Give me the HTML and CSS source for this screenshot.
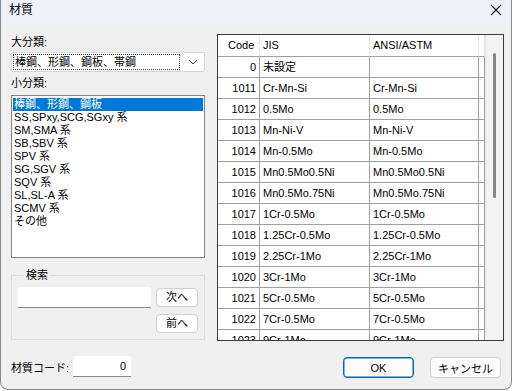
FILE: index.html
```html
<!DOCTYPE html>
<html lang="ja">
<head>
    <meta charset="UTF-8">
    <title>材質</title>
    <link rel="stylesheet" href="styles.css">
</head>
<body>
    <div class="window">
        <div class="titlebar">
            <span class="title">材質</span>
            <svg class="close" width="12" height="12" viewBox="0 0 12 12">
                <path d="M1 1L11 11M11 1L1 11" stroke="#1a1a1a" stroke-width="1.1" fill="none"/>
            </svg>
        </div>

        <div class="content">
            <div class="left">
                <div class="caption">大分類:</div>
                <div class="combo">
                    <div class="combo-text">棒鋼、形鋼、鋼板、帯鋼</div>
                    <svg class="chevron" width="10" height="6" viewBox="0 0 10 6">
                        <path d="M1 1L5 5L9 1" stroke="#444" stroke-width="1" fill="none"/>
                    </svg>
                </div>

                <div class="caption caption-second">小分類:</div>
                <ul class="listbox">
                    <li class="selected">棒鋼、形鋼、鋼板</li>
                    <li>SS,SPxy,SCG,SGxy 系</li>
                    <li>SM,SMA 系</li>
                    <li>SB,SBV 系</li>
                    <li>SPV 系</li>
                    <li>SG,SGV 系</li>
                    <li>SQV 系</li>
                    <li>SL,SL-A 系</li>
                    <li>SCMV 系</li>
                    <li>その他</li>
                </ul>

                <fieldset class="search">
                    <legend>検索</legend>
                    <div class="search-row">
                        <input type="text" class="search-input">
                        <div class="search-buttons">
                            <button class="btn btn-small">次へ</button>
                            <button class="btn btn-small">前へ</button>
                        </div>
                    </div>
                </fieldset>

                <div class="code-row">
                    <span class="code-label">材質コード:</span>
                    <div class="code-input">0</div>
                </div>
            </div>

            <div class="right">
                <div class="grid">
                    <div class="grid-view">
                        <table>
                            <colgroup>
                                <col class="col-code">
                                <col class="col-jis">
                                <col class="col-ansi">
                                <col class="col-extra">
                            </colgroup>
                            <thead>
                                <tr><th class="num">Code</th><th>JIS</th><th>ANSI/ASTM</th><th></th></tr>
                            </thead>
                            <tbody>
                                <tr><td class="num">0</td><td>未設定</td><td></td><td></td></tr>
                                <tr><td class="num">1011</td><td>Cr-Mn-Si</td><td>Cr-Mn-Si</td><td></td></tr>
                                <tr><td class="num">1012</td><td>0.5Mo</td><td>0.5Mo</td><td></td></tr>
                                <tr><td class="num">1013</td><td>Mn-Ni-V</td><td>Mn-Ni-V</td><td></td></tr>
                                <tr><td class="num">1014</td><td>Mn-0.5Mo</td><td>Mn-0.5Mo</td><td></td></tr>
                                <tr><td class="num">1015</td><td>Mn0.5Mo0.5Ni</td><td>Mn0.5Mo0.5Ni</td><td></td></tr>
                                <tr><td class="num">1016</td><td>Mn0.5Mo.75Ni</td><td>Mn0.5Mo.75Ni</td><td></td></tr>
                                <tr><td class="num">1017</td><td>1Cr-0.5Mo</td><td>1Cr-0.5Mo</td><td></td></tr>
                                <tr><td class="num">1018</td><td>1.25Cr-0.5Mo</td><td>1.25Cr-0.5Mo</td><td></td></tr>
                                <tr><td class="num">1019</td><td>2.25Cr-1Mo</td><td>2.25Cr-1Mo</td><td></td></tr>
                                <tr><td class="num">1020</td><td>3Cr-1Mo</td><td>3Cr-1Mo</td><td></td></tr>
                                <tr><td class="num">1021</td><td>5Cr-0.5Mo</td><td>5Cr-0.5Mo</td><td></td></tr>
                                <tr><td class="num">1022</td><td>7Cr-0.5Mo</td><td>7Cr-0.5Mo</td><td></td></tr>
                                <tr><td class="num">1023</td><td>9Cr-1Mo</td><td>9Cr-1Mo</td><td></td></tr>
                            </tbody>
                        </table>
                    </div>
                    <div class="scrollbar">
                        <div class="thumb"></div>
                    </div>
                </div>

                <div class="actions">
                    <button class="btn btn-default">OK</button>
                    <button class="btn">キャンセル</button>
                </div>
            </div>
        </div>
    </div>
</body>
</html>
```

FILE: styles.css
```css
* {
    margin: 0;
    padding: 0;
    box-sizing: border-box;
}

body {
    font-family: "Liberation Sans", "Noto Sans CJK JP", sans-serif;
    font-size: 11px;
    color: #000;
    background: #fff;
}

.window {
    width: 512px;
    height: 390px;
    background: #f0f0f0;
    border-right: 1px solid #8a8a8a;
    border-bottom: 1px solid #8a8a8a;
    border-left: 1px solid #8a8a8a;
    border-radius: 0 0 8px 8px;
    overflow: hidden;
}

.titlebar {
    height: 24px;
    background: #eef1f8;
    display: flex;
    align-items: center;
    justify-content: space-between;
    padding: 0 8px 4px 8px;
}

.title {
    font-size: 12px;
    line-height: 14px;
}

.close {
    margin-right: 1px;
}

.content {
    display: flex;
    gap: 12px;
    padding: 10px 0 0 10px;
}

/* left column */

.left {
    width: 194px;
    display: flex;
    flex-direction: column;
}

.caption {
    line-height: 16px;
}

.caption-second {
    margin-top: 3px;
}

.combo {
    margin-top: 2px;
    height: 20px;
    background: #fff;
    border: 1px solid #d4d4d4;
    border-radius: 2px;
    display: flex;
    align-items: center;
    padding: 1px;
}

.combo-text {
    flex: 1;
    height: 16px;
    line-height: 14px;
    border: 1px dotted #444;
    padding-left: 1px;
    white-space: nowrap;
    overflow: hidden;
}

.chevron {
    margin: 0 5px 0 8px;
}

.listbox {
    list-style: none;
    margin-top: 4px;
    height: 163px;
    background: #fff;
    border: 1px solid #828282;
    padding: 2px 1px;
}

.listbox li {
    height: 13px;
    line-height: 13px;
    padding-left: 1px;
    white-space: nowrap;
}

.listbox .selected {
    background: #0078d7;
    color: #fff;
}

.search {
    margin-top: 10px;
    border: 1px solid #dcdcdc;
    padding: 5px 6px 6px 6px;
}

.search legend {
    margin-left: 6px;
    padding: 0 2px;
    line-height: 14px;
}

.search-row {
    display: flex;
    gap: 5px;
}

.search-input {
    width: 133px;
    height: 21px;
    border: none;
    border-bottom: 1px solid #8a8a8a;
    border-radius: 3px 3px 0 0;
    background: #fff;
    outline: none;
}

.search-buttons {
    display: flex;
    flex-direction: column;
    gap: 7px;
    margin-top: 1px;
}

.btn {
    font-family: inherit;
    font-size: 11px;
    width: 71px;
    height: 21px;
    background: #fdfdfd;
    border: 1px solid #d0d0d0;
    border-radius: 4px;
    color: #000;
}

.btn-small {
    width: 42px;
    height: 19px;
    line-height: 15px;
}

.btn-default {
    border-color: #0067c0;
    box-shadow: inset 0 0 0 0.5px #0067c0;
}

.code-row {
    margin-top: 16px;
    display: flex;
    align-items: center;
    height: 21px;
}

.code-label {
    width: 62px;
    white-space: nowrap;
}

.code-input {
    width: 58px;
    height: 21px;
    line-height: 20px;
    background: #fff;
    border-bottom: 1px solid #8a8a8a;
    border-radius: 3px 3px 0 0;
    text-align: right;
    padding-right: 5px;
}

/* right column */

.right {
    width: 287px;
    display: flex;
    flex-direction: column;
}

.grid {
    height: 307px;
    border: 1px solid #3a3a3a;
    background: #fff;
    display: flex;
    overflow: hidden;
}

.grid-view {
    width: 267px;
    overflow: hidden;
}

table {
    border-collapse: separate;
    border-spacing: 0;
    table-layout: fixed;
    width: 267px;
}

.col-code { width: 42px; }
.col-jis { width: 110px; }
.col-ansi { width: 109px; }
.col-extra { width: 6px; }

th, td {
    font-weight: normal;
    text-align: left;
    white-space: nowrap;
    overflow: hidden;
    padding: 0 3px;
    border-right: 1px solid #a0a0a0;
    border-bottom: 1px solid #a0a0a0;
}

th {
    height: 22px;
    line-height: 21px;
    border-right-color: #e4e4e4;
}

td {
    height: 21px;
    line-height: 20px;
}

.num {
    text-align: right;
}

th.num {
    text-align: left;
    padding-left: 10px;
}

.scrollbar {
    width: 18px;
    background: #f3f3f3;
    border-left: 1px solid #e8e8e8;
}

.thumb {
    width: 3px;
    height: 145px;
    margin: 18px 0 0 7px;
    background: #858585;
    border-radius: 2px;
}

.actions {
    margin-top: 16px;
    display: flex;
    justify-content: flex-end;
    gap: 16px;
    padding-right: 3px;
}
```
